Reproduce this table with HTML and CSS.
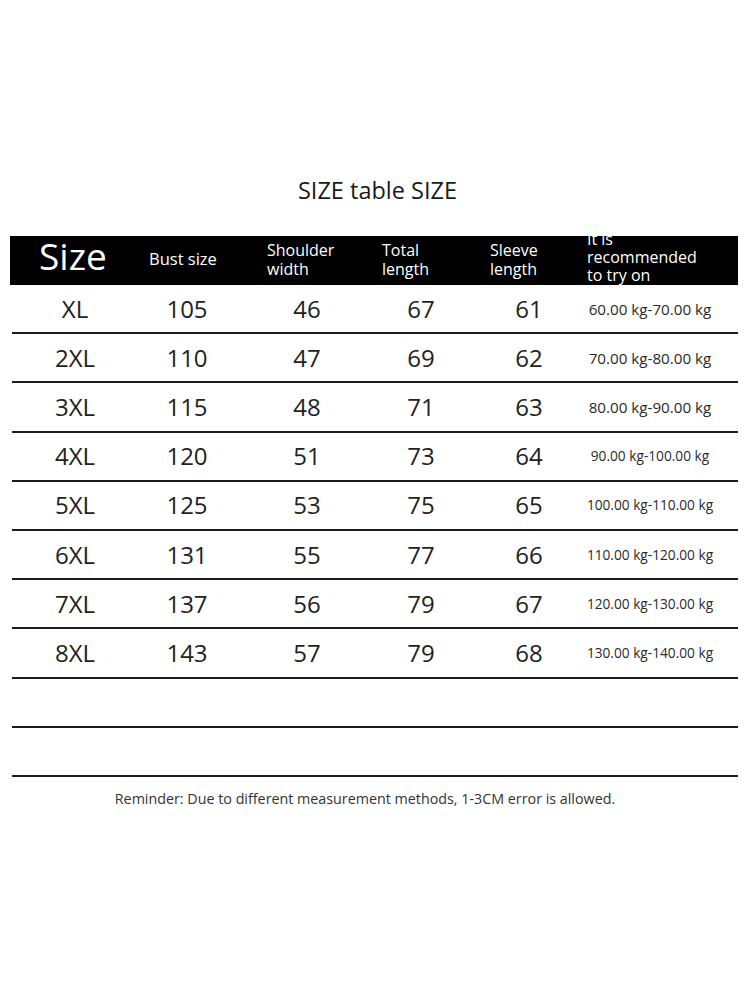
FILE: index.html
```html
<!DOCTYPE html>
<html lang="en">
<head>
<meta charset="utf-8">
<title>SIZE table SIZE</title>
<link rel="stylesheet" href="styles.css">
</head>
<body>
<main class="page">
  <h1 class="title">SIZE table SIZE</h1>
  <div class="table">
    <div class="head">
      <div class="hcell h-size">Size</div>
      <div class="hcell h-bust">Bust size</div>
      <div class="hcell">Shoulder<br>width</div>
      <div class="hcell">Total<br>length</div>
      <div class="hcell">Sleeve<br>length</div>
      <div class="hcell h-rec">It is<br>recommended<br>to try on</div>
    </div>
    <div class="row"><div class="cell">XL</div><div class="cell">105</div><div class="cell">46</div><div class="cell">67</div><div class="cell">61</div><div class="cell kg">60.00 kg-70.00 kg</div></div>
    <div class="row"><div class="cell">2XL</div><div class="cell">110</div><div class="cell">47</div><div class="cell">69</div><div class="cell">62</div><div class="cell kg">70.00 kg-80.00 kg</div></div>
    <div class="row"><div class="cell">3XL</div><div class="cell">115</div><div class="cell">48</div><div class="cell">71</div><div class="cell">63</div><div class="cell kg">80.00 kg-90.00 kg</div></div>
    <div class="row"><div class="cell">4XL</div><div class="cell">120</div><div class="cell">51</div><div class="cell">73</div><div class="cell">64</div><div class="cell kg kg-sm">90.00 kg-100.00 kg</div></div>
    <div class="row"><div class="cell">5XL</div><div class="cell">125</div><div class="cell">53</div><div class="cell">75</div><div class="cell">65</div><div class="cell kg kg-sm">100.00 kg-110.00 kg</div></div>
    <div class="row"><div class="cell">6XL</div><div class="cell">131</div><div class="cell">55</div><div class="cell">77</div><div class="cell">66</div><div class="cell kg kg-sm">110.00 kg-120.00 kg</div></div>
    <div class="row"><div class="cell">7XL</div><div class="cell">137</div><div class="cell">56</div><div class="cell">79</div><div class="cell">67</div><div class="cell kg kg-sm">120.00 kg-130.00 kg</div></div>
    <div class="row"><div class="cell">8XL</div><div class="cell">143</div><div class="cell">57</div><div class="cell">79</div><div class="cell">68</div><div class="cell kg kg-sm">130.00 kg-140.00 kg</div></div>
    <div class="row"></div>
    <div class="row"></div>
  </div>
  <p class="note">Reminder: Due to different measurement methods, 1-3CM error is allowed.</p>
</main>
</body>
</html>
```

FILE: styles.css
```css
* { box-sizing: border-box; }
html, body {
  margin: 0;
  padding: 0;
  background: #fff;
}
body {
  width: 750px;
  height: 1000px;
  font-family: "Open Sans", "Noto Sans", sans-serif;
  color: #1f1f1f;
}
.page {
  padding-top: 175px;
}
.title {
  margin: 0;
  text-align: center;
  font-size: 23.5px;
  font-weight: 400;
  line-height: 30px;
  height: 30px;
  padding-left: 5px;
  color: #1a1a1a;
}
.table {
  margin: 31px 12px 0 10px;
}
.head {
  display: grid;
  grid-template-columns: 110px 118px 115px 108px 97px 1fr;
  align-items: center;
  height: 49px;
  padding-left: 29px;
  background: #000;
  color: #fff;
  font-size: 16px;
  line-height: 19px;
}
.hcell {
  white-space: nowrap;
  margin-top: -2px;
}
.h-size {
  font-size: 37px;
  line-height: 40px;
  margin-top: -10px;
}
.h-bust {
  font-size: 16.5px;
  margin-top: -5px;
}
.h-rec {
  line-height: 18px;
  margin-top: -7px;
}
.row {
  display: grid;
  grid-template-columns: 66px 158px 82px 146px 70px 1fr;
  align-items: center;
  height: 49.2px;
  margin-left: 2px;
  padding-left: 30px;
  border-bottom: 2px solid #1c1c1c;
}
.cell {
  text-align: center;
  font-size: 24px;
  line-height: 28px;
  color: #222;
  white-space: nowrap;
}
.kg {
  font-size: 15.2px;
  line-height: 20px;
  color: #2a2a2a;
  padding-right: 2px;
}
.kg-sm {
  font-size: 13.7px;
}
.note {
  margin: 13px 0 0;
  text-align: center;
  font-size: 14.3px;
  line-height: 18px;
  color: #333;
  padding-right: 20px;
}
```
